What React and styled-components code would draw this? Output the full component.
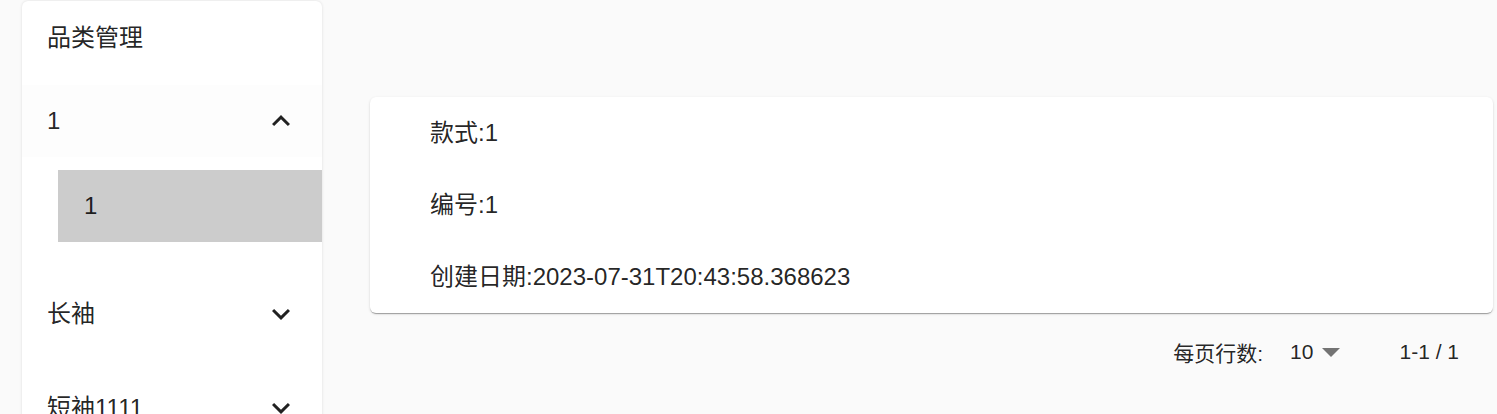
import React from 'react'
import styled, { createGlobalStyle } from 'styled-components'

const Global = createGlobalStyle`
body{
  margin:0;
  background:#fafafa;
  font-family:"Liberation Sans","Noto Sans CJK SC",sans-serif;
  color:rgba(0,0,0,0.87);
}
`

const ExpandLess = () => (
  <svg width="36" height="36" viewBox="0 0 24 24" fill="rgba(0,0,0,0.87)">
    <path d="M12 8l-6 6 1.41 1.41L12 10.83l4.59 4.58L18 14z" />
  </svg>
)

const ExpandMore = () => (
  <svg width="36" height="36" viewBox="0 0 24 24" fill="rgba(0,0,0,0.87)">
    <path d="M16.59 8.59L12 13.17 7.41 8.59 6 10l6 6 6-6z" />
  </svg>
)

const categories = [
  { name: '1', open: true, children: ['1'] },
  { name: '长袖', open: false, children: [] },
  { name: '短袖1111', open: false, children: [] },
]

const App = () => {
  return (
    <Page>
      <Global />
      <Sidebar>
        <Heading>品类管理</Heading>
        {categories.map((c) => (
          <Group key={c.name} open={c.open}>
            <Row open={c.open}>
              <Label open={c.open}>{c.name}</Label>
              <IconBox>{c.open ? <ExpandLess /> : <ExpandMore />}</IconBox>
            </Row>
            {c.open && (
              <Nested>
                {c.children.map((s) => (
                  <SubItem key={s}>{s}</SubItem>
                ))}
              </Nested>
            )}
          </Group>
        ))}
      </Sidebar>
      <Main>
        <Card>
          <Line>款式:1</Line>
          <Line>编号:1</Line>
          <Line>创建日期:2023-07-31T20:43:58.368623</Line>
        </Card>
        <Pager>
          <span>每页行数:</span>
          <Select>
            <span>10</span>
            <svg width="18" height="9" viewBox="0 0 10 5" fill="rgba(0,0,0,0.54)">
              <path d="M0 0l5 5 5-5z" />
            </svg>
          </Select>
          <Shown>1-1 / 1</Shown>
        </Pager>
      </Main>
    </Page>
  )
}

export default App

const Page = styled.div`
display:flex;
align-items:flex-start;
height:414px;
overflow:hidden;
`

const Sidebar = styled.div`
margin:1px 0 0 22px;
width:300px;
flex-shrink:0;
min-height:600px;
background:#fff;
border-radius:6px 6px 0 0;
box-shadow:0 0 3px rgba(0,0,0,0.12);
`

const Heading = styled.div`
height:84px;
padding:0 0 16px 25px;
box-sizing:border-box;
display:flex;
align-items:center;
font-size:24px;
`

const Group = styled.div`
padding-bottom:${(p) => (p.open ? '25px' : '0')};
`

const Row = styled.div`
height:${(p) => (p.open ? '72px' : '94px')};
display:flex;
align-items:center;
justify-content:space-between;
padding:0 23px 0 25px;
background:${(p) => (p.open ? '#fdfdfd' : '#fff')};
font-size:24px;
`

const Label = styled.span`
padding-bottom:${(p) => (p.open ? '0' : '5px')};
`

const IconBox = styled.span`
display:flex;
width:36px;
height:36px;
`

const Nested = styled.div`
padding-top:13px;
`

const SubItem = styled.div`
margin-left:36px;
height:72px;
display:flex;
align-items:center;
padding-left:26px;
background:#cccccc;
font-size:24px;
`

const Main = styled.div`
flex:1;
padding:97px 4px 0 48px;
`

const Card = styled.div`
background:#fff;
border-radius:6px;
padding-left:60px;
box-shadow:0px 2px 1px -1px rgba(0,0,0,0.2),0px 1px 1px 0px rgba(0,0,0,0.14),0px 1px 3px 0px rgba(0,0,0,0.12);
`

const Line = styled.div`
height:72px;
box-sizing:border-box;
padding-bottom:5px;
display:flex;
align-items:center;
font-size:24px;
`

const Pager = styled.div`
height:78px;
display:flex;
align-items:center;
justify-content:flex-end;
padding-right:34px;
font-size:21px;
`

const Select = styled.div`
display:flex;
align-items:center;
gap:9px;
margin-left:27px;
`

const Shown = styled.span`
margin-left:59px;
`
